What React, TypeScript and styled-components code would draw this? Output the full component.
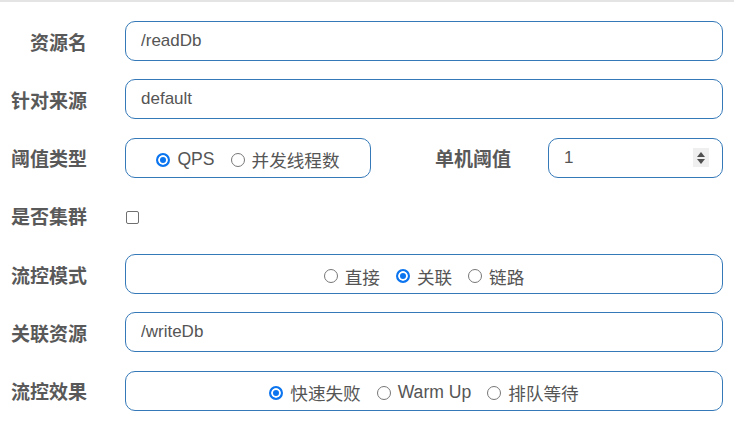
import React from "react";
import styled, { createGlobalStyle } from "styled-components";

const GlobalStyle = createGlobalStyle`
  html, body {
    margin: 0;
    padding: 0;
    background: #fff;
  }
  body {
    font-family: "Liberation Sans", "Noto Sans CJK SC", Arial, sans-serif;
  }
`;

const Form = styled.form`
  border-top: 2px solid #e4e4e4;
  padding: 19px 11px 20px 0;
`;

const Row = styled.div`
  display: flex;
  align-items: center;
  height: 40px;
  margin-bottom: 18.3px;
`;

const Label = styled.label`
  width: 87px;
  margin-right: 38px;
  flex-shrink: 0;
  text-align: right;
  font-size: 19px;
  font-weight: bold;
  color: #595959;
  white-space: nowrap;
`;

const SideLabel = styled(Label)`
  width: auto;
  flex: 1;
  margin-right: 37px;
`;

const Field = styled.div<{ $width?: number; $center?: boolean }>`
  box-sizing: border-box;
  height: 40px;
  ${(p) => (p.$width ? `width: ${p.$width}px; flex-shrink: 0;` : "flex: 1;")}
  border: 1px solid #3579b8;
  border-radius: 10px;
  display: flex;
  align-items: center;
  justify-content: ${(p) => (p.$center ? "center" : "flex-start")};
  padding: 0 15px;
  background: #fff;
`;

const TextInput = styled.input`
  flex: 1;
  min-width: 0;
  border: none;
  outline: none;
  padding: 0;
  font-family: "Liberation Sans", "Noto Sans CJK SC", Arial, sans-serif;
  font-size: 17px;
  color: #555;
  background: transparent;
`;

const Spinner = styled.span`
  width: 16px;
  height: 19px;
  margin-right: -2px;
  background: #efefef;
  display: flex;
  flex-direction: column;
  align-items: center;
  justify-content: center;
  gap: 2px;
`;

const Arrow = styled.span<{ $up?: boolean }>`
  width: 0;
  height: 0;
  border-left: 4.5px solid transparent;
  border-right: 4.5px solid transparent;
  ${(p) =>
    p.$up ? "border-bottom: 5px solid #505050;" : "border-top: 5px solid #505050;"}
`;

const Option = styled.span`
  display: inline-flex;
  align-items: center;
  margin: 0 8px;
  padding-top: 4px;
  font-size: 17.6px;
  color: #555;
  white-space: nowrap;
`;

const RadioDot = styled.span<{ $checked?: boolean }>`
  box-sizing: border-box;
  width: 14px;
  height: 14px;
  border-radius: 50%;
  margin-right: 7px;
  ${(p) =>
    p.$checked
      ? "border: 2px solid #0b74ef; background: #0b74ef; box-shadow: inset 0 0 0 2px #fff;"
      : "border: 1px solid #777; background: #fff;"}
`;

const CheckBox = styled.span`
  box-sizing: border-box;
  width: 13px;
  height: 13px;
  border: 1px solid #6f6f6f;
  border-radius: 2px;
  margin: 4px 0 0 1px;
`;

type RadioGroupProps = { options: string[]; checked: number };

function RadioGroup({ options, checked }: RadioGroupProps) {
  return (
    <>
      {options.map((o, i) => (
        <Option key={o}>
          <RadioDot $checked={i === checked} />
          {o}
        </Option>
      ))}
    </>
  );
}

export default function App() {
  return (
    <>
      <GlobalStyle />
      <Form>
        <Row>
          <Label>资源名</Label>
          <Field>
            <TextInput defaultValue="/readDb" />
          </Field>
        </Row>
        <Row>
          <Label>针对来源</Label>
          <Field>
            <TextInput defaultValue="default" />
          </Field>
        </Row>
        <Row>
          <Label>阈值类型</Label>
          <Field $width={246} $center>
            <RadioGroup options={["QPS", "并发线程数"]} checked={0} />
          </Field>
          <SideLabel>单机阈值</SideLabel>
          <Field $width={175}>
            <TextInput defaultValue="1" />
            <Spinner>
              <Arrow $up />
              <Arrow />
            </Spinner>
          </Field>
        </Row>
        <Row>
          <Label>是否集群</Label>
          <CheckBox />
        </Row>
        <Row>
          <Label>流控模式</Label>
          <Field $center>
            <RadioGroup options={["直接", "关联", "链路"]} checked={1} />
          </Field>
        </Row>
        <Row>
          <Label>关联资源</Label>
          <Field>
            <TextInput defaultValue="/writeDb" />
          </Field>
        </Row>
        <Row>
          <Label>流控效果</Label>
          <Field $center>
            <RadioGroup options={["快速失败", "Warm Up", "排队等待"]} checked={0} />
          </Field>
        </Row>
      </Form>
    </>
  );
}
